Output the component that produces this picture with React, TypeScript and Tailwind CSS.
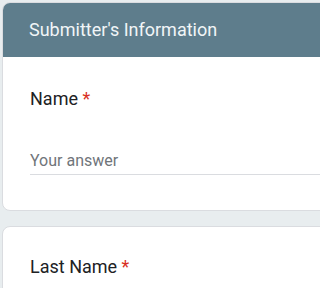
const Field = ({ label }: { label: string }) => (
  <div className="text-[18px] leading-[24px] text-[#202124]">
    {label} <span className="text-[#d93025]">*</span>
  </div>
)

const App = () => {
  return (
    <div
      className="h-screen w-full overflow-hidden bg-[#e8edef] pl-[2px] pt-[2px]"
      style={{ fontFamily: "Roboto, 'Noto Sans', sans-serif" }}
    >
      <div className="-mr-6">
        <div className="overflow-hidden rounded-lg border border-[#dadce0] bg-white">
          <div className="h-[54px] bg-[#5e7d8c] pl-[26px] pt-[15px] text-[18px] leading-[24px] text-[#f1f5f7]">
            Submitter's Information
          </div>
          <div className="pl-[27px] pt-[30px] pb-[35px]">
            <Field label="Name" />
            <div className="mt-[40px] border-b border-[#dadce0] pb-[3px] text-[16px] leading-[20px] text-[#70757a]">
              Your answer
            </div>
          </div>
        </div>
        <div className="mt-[15px] rounded-lg border border-[#dadce0] bg-white pl-[27px] pt-[28px] pb-[30px]">
          <Field label="Last Name" />
        </div>
      </div>
    </div>
  )
}

export default App
